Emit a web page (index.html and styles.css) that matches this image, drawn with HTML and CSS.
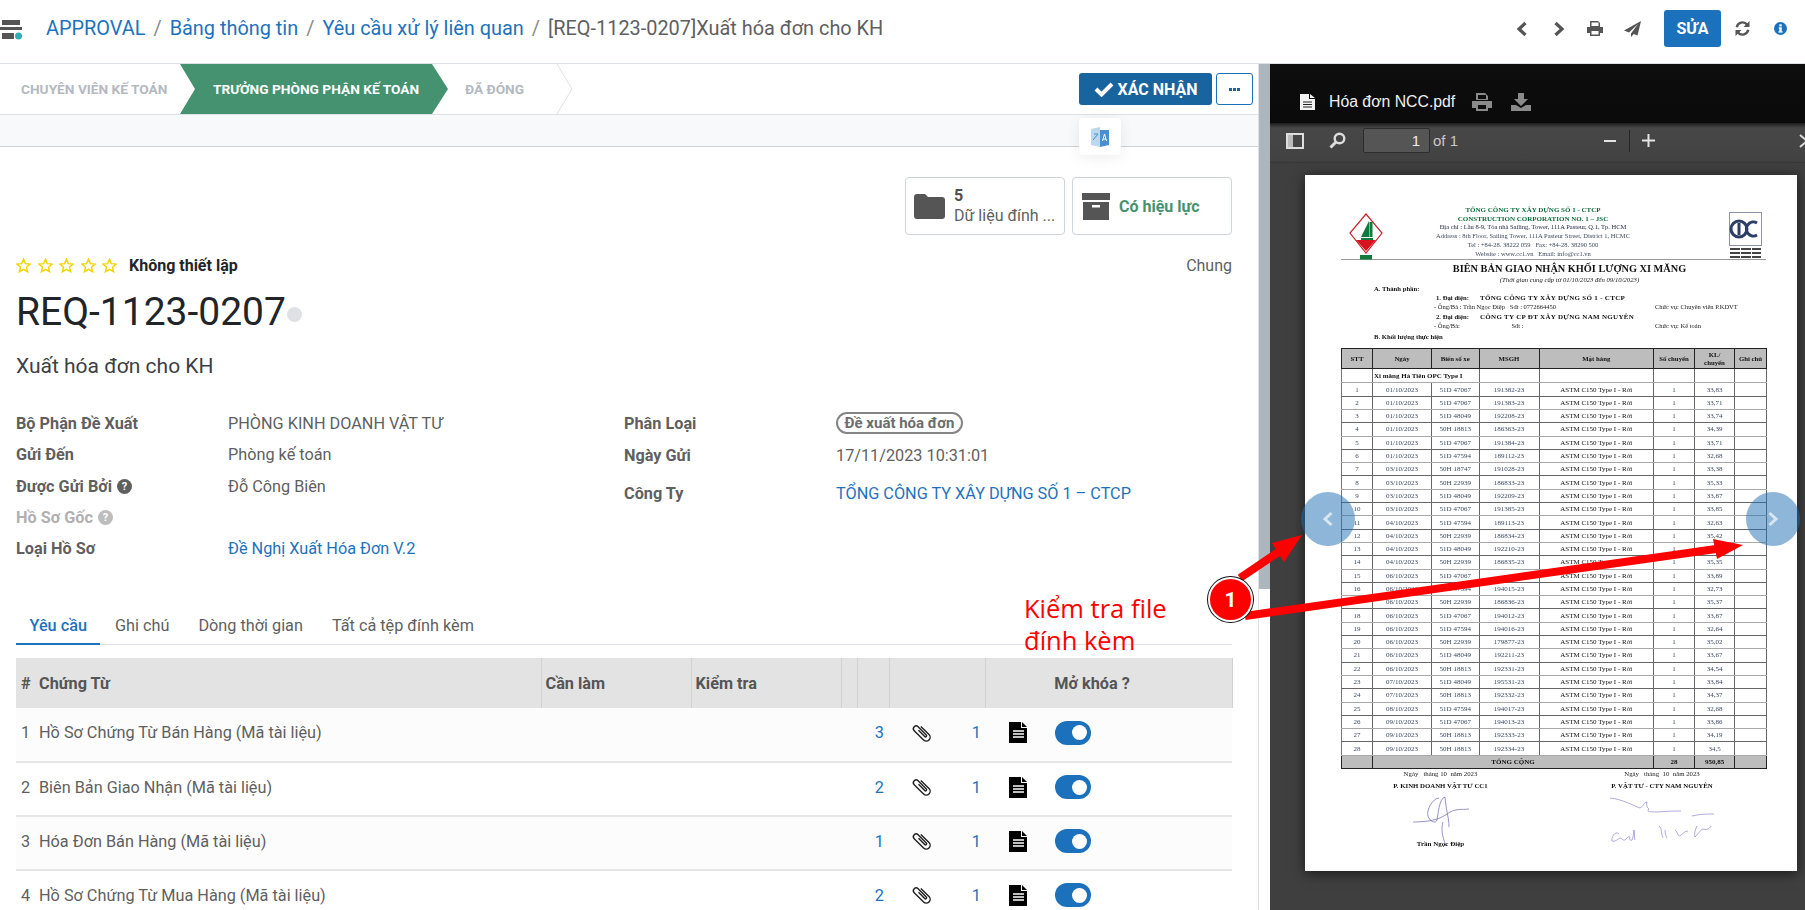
FILE: index.html
```html
<!DOCTYPE html>
<html lang="vi">
<head>
<meta charset="utf-8">
<title>Xuất hóa đơn cho KH</title>
<link rel="stylesheet" href="styles.css">
</head>
<body>
<header class="topbar">
  <svg class="logo" width="24" height="24" viewBox="0 0 24 24"><rect x="2" y="3" width="18" height="5" fill="#555"/><rect x="0" y="10" width="22" height="3" fill="#555"/><rect x="2" y="16" width="12" height="6" fill="#555"/><circle cx="18.500" cy="19" r="3.500" fill="#2fb0b5"/></svg>
  <nav class="crumbs">
    <a>APPROVAL</a><span class="sep">/</span><a>Bảng thông tin</a><span class="sep">/</span><a>Yêu cầu xử lý liên quan</a><span class="sep">/</span><span class="cur">[REQ-1123-0207]Xuất hóa đơn cho KH</span>
  </nav>
  <div class="tools">
    <svg width="12" height="16" viewBox="0 0 12 16" class="t-prev"><path d="M9.500 2 3 8l6.500 6" fill="none" stroke="#555" stroke-width="3.200"/></svg>
    <svg width="12" height="16" viewBox="0 0 12 16" class="t-next"><path d="M2.500 2 9 8l-6.500 6" fill="none" stroke="#555" stroke-width="3.200"/></svg>
    <svg width="16" height="15" viewBox="0 0 16 15" class="t-print"><path d="M3 0h8l2 2v4H3zM0 6h16v6h-3v3H3v-3H0z" fill="#555"/><rect x="4.500" y="1.500" width="7" height="3.500" fill="#fff"/><rect x="4.500" y="10" width="7" height="3.500" fill="#fff"/></svg>
    <svg width="17" height="16" viewBox="0 0 17 16" class="t-send"><path d="M17 0 0 9.500l5 2L14 3 7 12.500V16l2.800-3 3.700 1.500z" fill="#555"/></svg>
    <button class="btn-edit">SỬA</button>
    <svg width="15" height="15" viewBox="0 0 15 15" class="t-sync"><path d="M1.800 6.200A5.800 5.800 0 0 1 12 3.500M13.200 8.800A5.800 5.800 0 0 1 3 11.500" fill="none" stroke="#555" stroke-width="2.400"/><path d="M14.500 0v6h-6zM.5 15V9h6z" fill="#555"/></svg>
    <svg width="13" height="13" viewBox="0 0 13 13" class="t-info"><circle cx="6.500" cy="6.500" r="6.500" fill="#1b71bb"/><rect x="5.300" y="2.300" width="2.400" height="2.200" fill="#fff"/><rect x="4.700" y="5.500" width="3" height="1.200" fill="#fff"/><rect x="5.300" y="5.500" width="2.400" height="4" fill="#fff"/><rect x="4.500" y="9.200" width="4" height="1.400" fill="#fff"/></svg>
  </div>
</header>

<main class="split">
  <section class="form-pane">
    <div class="statusbar">
      <div class="stages">
        <span class="stage">CHUYÊN VIÊN KẾ TOÁN</span>
        <span class="stage active">TRƯỞNG PHÒNG PHẬN KẾ TOÁN</span>
        <span class="stage last">ĐÃ ĐÓNG
          <svg class="chev" width="16" height="50" viewBox="0 0 16 50"><path d="M0 0l15 25L0 50" fill="none" stroke="#dee2e6"/></svg>
        </span>
      </div>
      <div class="actions">
        <button class="btn-confirm"><svg width="20" height="16" viewBox="0 0 20 16"><path d="M2 8l5.500 5.500L18 3" fill="none" stroke="#fff" stroke-width="4"/></svg>XÁC NHẬN</button>
        <button class="btn-more"><i></i><i></i><i></i></button>
      </div>
    </div>
    <div class="strip"></div>
    <div class="translate-pop"><svg width="18" height="20" viewBox="0 0 18 20"><path d="M0 2l9-2v20L0 18z" fill="#bcd8f0"/><path d="M9 3l9 0v15l-9 2z" fill="#4a90d0"/><path d="M2 13l5-6M3 7h4" stroke="#4a90d0" fill="none"/><path d="M11.500 14l2-7 2 7M12.300 12h2.500" stroke="#fff" fill="none"/></svg></div>

    <div class="sheet">
      <div class="stat-row">
        <div class="stat">
          <svg width="31" height="25" viewBox="0 0 31 25"><path d="M3 0h8l3 3h14a3 3 0 0 1 3 3v16a3 3 0 0 1-3 3H3a3 3 0 0 1-3-3V3a3 3 0 0 1 3-3z" fill="#555"/></svg>
          <div class="stat-txt"><b>5</b><span>Dữ liệu đính ...</span></div>
        </div>
        <div class="stat">
          <svg width="28" height="27" viewBox="0 0 28 27"><rect width="28" height="7" fill="#555"/><path d="M1 9h26v18H1z" fill="#555"/><rect x="10" y="12" width="8" height="2.500" fill="#fff"/></svg>
          <b class="stat-green">Có hiệu lực</b>
        </div>
      </div>

      <div class="rating">
        <div class="stars">
          <svg width="15" height="15" viewBox="0 0 24 24"><path d="M12 2l3 7 7.500.7-5.700 5 1.700 7.300L12 18.200 5.500 22l1.700-7.300-5.700-5L9 9z" fill="none" stroke="#f2d500" stroke-width="2.400"/></svg>
          <svg width="15" height="15" viewBox="0 0 24 24"><path d="M12 2l3 7 7.500.7-5.700 5 1.700 7.300L12 18.200 5.500 22l1.700-7.300-5.700-5L9 9z" fill="none" stroke="#f2d500" stroke-width="2.400"/></svg>
          <svg width="15" height="15" viewBox="0 0 24 24"><path d="M12 2l3 7 7.500.7-5.700 5 1.700 7.300L12 18.200 5.500 22l1.700-7.300-5.700-5L9 9z" fill="none" stroke="#f2d500" stroke-width="2.400"/></svg>
          <svg width="15" height="15" viewBox="0 0 24 24"><path d="M12 2l3 7 7.500.7-5.700 5 1.700 7.300L12 18.200 5.500 22l1.700-7.300-5.700-5L9 9z" fill="none" stroke="#f2d500" stroke-width="2.400"/></svg>
          <svg width="15" height="15" viewBox="0 0 24 24"><path d="M12 2l3 7 7.500.7-5.700 5 1.700 7.300L12 18.200 5.500 22l1.700-7.300-5.700-5L9 9z" fill="none" stroke="#f2d500" stroke-width="2.400"/></svg>
        </div>
        <b class="rating-lbl">Không thiết lập</b>
        <span class="rating-right">Chung</span>
      </div>

      <h1 class="title">REQ-1123-0207<i class="dot"></i></h1>
      <div class="subtitle">Xuất hóa đơn cho KH</div>

      <div class="fields">
        <div class="col-left">
          <div class="f"><b>Bộ Phận Đề Xuất</b><span>PHÒNG KINH DOANH VẬT TƯ</span></div>
          <div class="f"><b>Gửi Đến</b><span>Phòng kế toán</span></div>
          <div class="f"><b>Được Gửi Bởi <em class="q">?</em></b><span>Đỗ Công Biên</span></div>
          <div class="f muted"><b>Hồ Sơ Gốc <em class="q">?</em></b></div>
          <div class="f"><b>Loại Hồ Sơ</b><a>Đề Nghị Xuất Hóa Đơn V.2</a></div>
        </div>
        <div class="col-right">
          <div class="f"><b>Phân Loại</b><span class="pill">Đề xuất hóa đơn</span></div>
          <div class="f"><b>Ngày Gửi</b><span>17/11/2023 10:31:01</span></div>
          <div class="f tall"><b>Công Ty</b><a>TỔNG CÔNG TY XÂY DỰNG SỐ 1 – CTCP</a></div>
        </div>
      </div>

      <div class="tabs">
        <span class="tab on">Yêu cầu</span>
        <span class="tab">Ghi chú</span>
        <span class="tab">Dòng thời gian</span>
        <span class="tab">Tất cả tệp đính kèm</span>
      </div>

      <table class="grid">
        <colgroup><col class="c1"><col class="c2"><col class="c3"><col class="c4"><col class="c5"><col class="c6"><col class="c7"><col class="c8"></colgroup>
        <thead><tr><th class="num">#</th><th>Chứng Từ</th><th>Cần làm</th><th>Kiểm tra</th><th></th><th></th><th></th><th class="mid">Mở khóa ?</th></tr></thead>
        <tbody>
          <tr><td class="num">1</td><td>Hồ Sơ Chứng Từ Bán Hàng (Mã tài liệu)</td><td></td><td></td><td></td><td class="cnt">3</td><td><div class="att"><svg width="22" height="22" viewBox="0 0 20 20"><path transform="rotate(-45 10 10)" d="M13.500 5V15.500a3.500 3.500 0 0 1-7 0V3.500a2.500 2.500 0 0 1 5 0V14a1 1 0 0 1-2 0V6" fill="none" stroke="#222" stroke-width="1.300"/></svg><a>1</a></div></td><td><div class="end"><svg width="19" height="21" viewBox="0 0 19 21"><path d="M0 0h12v6h6v15H0z" fill="#000"/><path d="M13 0l5 5h-5z" fill="#000"/><path d="M4 9h11M4 12h11M4 15h11" stroke="#fff" stroke-width="1.300"/></svg><span class="toggle"></span></div></td></tr>
          <tr><td class="num">2</td><td>Biên Bản Giao Nhận (Mã tài liệu)</td><td></td><td></td><td></td><td class="cnt">2</td><td><div class="att"><svg width="22" height="22" viewBox="0 0 20 20"><path transform="rotate(-45 10 10)" d="M13.500 5V15.500a3.500 3.500 0 0 1-7 0V3.500a2.500 2.500 0 0 1 5 0V14a1 1 0 0 1-2 0V6" fill="none" stroke="#222" stroke-width="1.300"/></svg><a>1</a></div></td><td><div class="end"><svg width="19" height="21" viewBox="0 0 19 21"><path d="M0 0h12v6h6v15H0z" fill="#000"/><path d="M13 0l5 5h-5z" fill="#000"/><path d="M4 9h11M4 12h11M4 15h11" stroke="#fff" stroke-width="1.300"/></svg><span class="toggle"></span></div></td></tr>
          <tr><td class="num">3</td><td>Hóa Đơn Bán Hàng (Mã tài liệu)</td><td></td><td></td><td></td><td class="cnt">1</td><td><div class="att"><svg width="22" height="22" viewBox="0 0 20 20"><path transform="rotate(-45 10 10)" d="M13.500 5V15.500a3.500 3.500 0 0 1-7 0V3.500a2.500 2.500 0 0 1 5 0V14a1 1 0 0 1-2 0V6" fill="none" stroke="#222" stroke-width="1.300"/></svg><a>1</a></div></td><td><div class="end"><svg width="19" height="21" viewBox="0 0 19 21"><path d="M0 0h12v6h6v15H0z" fill="#000"/><path d="M13 0l5 5h-5z" fill="#000"/><path d="M4 9h11M4 12h11M4 15h11" stroke="#fff" stroke-width="1.300"/></svg><span class="toggle"></span></div></td></tr>
          <tr><td class="num">4</td><td>Hồ Sơ Chứng Từ Mua Hàng (Mã tài liệu)</td><td></td><td></td><td></td><td class="cnt">2</td><td><div class="att"><svg width="22" height="22" viewBox="0 0 20 20"><path transform="rotate(-45 10 10)" d="M13.500 5V15.500a3.500 3.500 0 0 1-7 0V3.500a2.500 2.500 0 0 1 5 0V14a1 1 0 0 1-2 0V6" fill="none" stroke="#222" stroke-width="1.300"/></svg><a>1</a></div></td><td><div class="end"><svg width="19" height="21" viewBox="0 0 19 21"><path d="M0 0h12v6h6v15H0z" fill="#000"/><path d="M13 0l5 5h-5z" fill="#000"/><path d="M4 9h11M4 12h11M4 15h11" stroke="#fff" stroke-width="1.300"/></svg><span class="toggle"></span></div></td></tr>
        </tbody>
      </table>
    </div>
  </section>

  <div class="scroll"><div class="thumb"></div></div>

  <section class="viewer">
    <div class="v-head">
      <svg width="15" height="16" viewBox="0 0 15 16"><path d="M0 0h9v5h6v11H0z" fill="#f2f2f2"/><path d="M10 0l5 4h-5z" fill="#f2f2f2"/><path d="M3 8h9M3 10.500h9M3 13h9" stroke="#222"/></svg>
      <span class="v-name">Hóa đơn NCC.pdf</span>
      <svg class="v-print" width="20" height="18" viewBox="0 0 20 18"><path d="M4 0h9l3 3v4H4zM0 8h20v7h-4v3H4v-3H0z" fill="#8a8a8a"/><rect x="6" y="2" width="8" height="4" fill="#0d0d0d"/><rect x="6" y="12" width="8" height="4" fill="#0d0d0d"/></svg>
      <svg class="v-dl" width="20" height="18" viewBox="0 0 20 18"><path d="M7 0h6v6h4l-7 7-7-7h4z" fill="#8a8a8a"/><path d="M0 12h5l5 3 5-3h5v6H0z" fill="#8a8a8a"/></svg>
    </div>
    <div class="v-tool">
      <svg class="vt-side" width="18" height="16" viewBox="0 0 18 16"><rect x="1" y="1" width="16" height="14" fill="none" stroke="#ddd" stroke-width="2"/><rect x="2" y="2" width="5" height="12" fill="#bbb"/></svg>
      <svg class="vt-find" width="17" height="17" viewBox="0 0 17 17"><circle cx="10.500" cy="6.500" r="4.800" fill="none" stroke="#ddd" stroke-width="2.400"/><path d="M7 10l-5.500 5.500" stroke="#ddd" stroke-width="3"/></svg>
      <span class="vt-page">1</span>
      <span class="vt-of">of 1</span>
      <span class="vt-minus"></span>
      <span class="vt-div"></span>
      <svg class="vt-plus" width="13" height="13" viewBox="0 0 13 13"><path d="M0 6.500h13M6.500 0v13" stroke="#e4e4e4" stroke-width="2"/></svg>
      <svg class="vt-more" width="10" height="14" viewBox="0 0 10 14"><path d="M1 1l7 6-7 6" fill="none" stroke="#ddd" stroke-width="2"/></svg>
    </div>
    <div class="v-body">
      <article class="page">
        <div class="letterhead">
          <svg class="cc1" width="34" height="48" viewBox="0 0 34 48"><path d="M17 1 33 20 17 40 1 20z" fill="#fff" stroke="#c8232c" stroke-width="1.200"/><path d="M12 24 20 8v16z" fill="#0f7a3c"/><rect x="20.500" y="9" width="3" height="15" fill="#0f7a3c"/><rect x="12" y="25" width="12" height="2" fill="#0f7a3c"/><path d="M7 27h20L17 38z" fill="#d9121f"/><rect x="11" y="42" width="12" height="4.500" fill="#0f7a3c"/></svg>
          <div class="lh-text">
            <div class="lh-green">TỔNG CÔNG TY XÂY DỰNG SỐ 1 - CTCP</div>
            <div class="lh-green">CONSTRUCTION CORPORATION NO. 1 – JSC</div>
            <div class="lh-dark">Địa chỉ : Lầu 8-9, Tòa nhà Sailing, Tower, 111A Pasteur, Q.1, Tp. HCM</div>
            <div>Address : 8th Floor, Sailing Tower, 111A Pasteur Street, District 1, HCMC</div>
            <div>Tel : +84-28. 38222 059 &nbsp; Fax: +84-28. 38290 500</div>
            <div>Website : www.cc1.vn &nbsp; Email: info@cc1.vn</div>
          </div>
          <svg class="cert" width="33" height="48" viewBox="0 0 33 48"><rect x=".5" y=".5" width="32" height="33" fill="#fff" stroke="#8a94a6"/><circle cx="10" cy="17" r="8" fill="none" stroke="#2c3e66" stroke-width="3"/><rect x="8.500" y="11" width="3" height="12" fill="#2c3e66"/><path d="M28 11a7 7 0 1 0 0 12" fill="none" stroke="#2c3e66" stroke-width="3"/><path d="M1 37h31M1 41h31M1 45h31" stroke="#444" stroke-width="2" stroke-dasharray="10 1"/></svg>
        </div>
        <div class="doc-title">BIÊN BẢN GIAO NHẬN KHỐI LƯỢNG XI MĂNG</div>
        <div class="doc-sub">(Thời gian cung cấp từ 01/10/2023 đến 09/10/2023)</div>
        <div class="sec-a">A. Thành phần:</div>
        <div class="party"><b class="p-lbl">1. Đại diện:</b><b class="p-name">TỔNG CÔNG TY XÂY DỰNG SỐ 1 - CTCP</b></div>
        <div class="person"><span class="p-who">- Ông/Bà : Trần Ngọc Điệp &nbsp; Sđt : 0772664450</span><span class="p-role">Chức vụ: Chuyên viên P.KDVT</span></div>
        <div class="party"><b class="p-lbl">2. Đại diện:</b><b class="p-name">CÔNG TY CP ĐT XÂY DỰNG NAM NGUYÊN</b></div>
        <div class="person"><span class="p-who">- Ông/Bà: <span class="p-sdt">Sđt :</span></span><span class="p-role">Chức vụ: Kế toán</span></div>
        <div class="sec-b">B. Khối lượng thực hiện</div>
        <table class="pdf">
          <colgroup><col class="p1"><col class="p2"><col class="p3"><col class="p4"><col class="p5"><col class="p6"><col class="p7"><col class="p8"></colgroup>
          <thead><tr><th>STT</th><th>Ngày</th><th>Biển số xe</th><th>MSGH</th><th>Mặt hàng</th><th>Số chuyến</th><th>KL/<br>chuyến</th><th>Ghi chú</th></tr></thead>
          <tbody>
            <tr class="kind"><td></td><td colspan="2" class="kind-name">Xi măng Hà Tiên OPC Type I</td><td></td><td></td><td></td><td></td><td></td></tr>
            <tr><td>1</td><td>01/10/2023</td><td>51D 47067</td><td>191382-23</td><td class="g">ASTM C150 Type I - Rời</td><td>1</td><td>33,83</td><td></td></tr>
            <tr><td>2</td><td>01/10/2023</td><td>51D 47067</td><td>191383-23</td><td class="g">ASTM C150 Type I - Rời</td><td>1</td><td>33,71</td><td></td></tr>
            <tr><td>3</td><td>01/10/2023</td><td>51D 48049</td><td>192208-23</td><td class="g">ASTM C150 Type I - Rời</td><td>1</td><td>33,74</td><td></td></tr>
            <tr><td>4</td><td>01/10/2023</td><td>50H 18813</td><td>186363-23</td><td class="g">ASTM C150 Type I - Rời</td><td>1</td><td>34,39</td><td></td></tr>
            <tr><td>5</td><td>01/10/2023</td><td>51D 47067</td><td>191384-23</td><td class="g">ASTM C150 Type I - Rời</td><td>1</td><td>33,71</td><td></td></tr>
            <tr><td>6</td><td>01/10/2023</td><td>51D 47594</td><td>189112-23</td><td class="g">ASTM C150 Type I - Rời</td><td>1</td><td>32,68</td><td></td></tr>
            <tr><td>7</td><td>03/10/2023</td><td>50H 18747</td><td>191028-23</td><td class="g">ASTM C150 Type I - Rời</td><td>1</td><td>33,38</td><td></td></tr>
            <tr><td>8</td><td>03/10/2023</td><td>50H 22939</td><td>186833-23</td><td class="g">ASTM C150 Type I - Rời</td><td>1</td><td>35,33</td><td></td></tr>
            <tr><td>9</td><td>03/10/2023</td><td>51D 48049</td><td>192209-23</td><td class="g">ASTM C150 Type I - Rời</td><td>1</td><td>33,87</td><td></td></tr>
            <tr><td>10</td><td>03/10/2023</td><td>51D 47067</td><td>191385-23</td><td class="g">ASTM C150 Type I - Rời</td><td>1</td><td>33,85</td><td></td></tr>
            <tr><td>11</td><td>04/10/2023</td><td>51D 47594</td><td>189113-23</td><td class="g">ASTM C150 Type I - Rời</td><td>1</td><td>32,63</td><td></td></tr>
            <tr><td>12</td><td>04/10/2023</td><td>50H 22939</td><td>186834-23</td><td class="g">ASTM C150 Type I - Rời</td><td>1</td><td>35,42</td><td></td></tr>
            <tr><td>13</td><td>04/10/2023</td><td>51D 48049</td><td>192210-23</td><td class="g">ASTM C150 Type I - Rời</td><td>1</td><td></td><td></td></tr>
            <tr><td>14</td><td>04/10/2023</td><td>50H 22939</td><td>186835-23</td><td class="g">ASTM C150 Type I - Rời</td><td>1</td><td>35,35</td><td></td></tr>
            <tr><td>15</td><td>06/10/2023</td><td>51D 47067</td><td></td><td class="g">ASTM C150 Type I - Rời</td><td>1</td><td>33,89</td><td></td></tr>
            <tr><td>16</td><td>06/10/2023</td><td>51D 47594</td><td>194015-23</td><td class="g">ASTM C150 Type I - Rời</td><td>1</td><td>32,73</td><td></td></tr>
            <tr><td>17</td><td>06/10/2023</td><td>50H 22939</td><td>186836-23</td><td class="g">ASTM C150 Type I - Rời</td><td>1</td><td>35,37</td><td></td></tr>
            <tr><td>18</td><td>06/10/2023</td><td>51D 47067</td><td>194012-23</td><td class="g">ASTM C150 Type I - Rời</td><td>1</td><td>33,87</td><td></td></tr>
            <tr><td>19</td><td>06/10/2023</td><td>51D 47594</td><td>194016-23</td><td class="g">ASTM C150 Type I - Rời</td><td>1</td><td>32,64</td><td></td></tr>
            <tr><td>20</td><td>06/10/2023</td><td>50H 22939</td><td>179877-23</td><td class="g">ASTM C150 Type I - Rời</td><td>1</td><td>35,02</td><td></td></tr>
            <tr><td>21</td><td>06/10/2023</td><td>51D 48049</td><td>192211-23</td><td class="g">ASTM C150 Type I - Rời</td><td>1</td><td>33,67</td><td></td></tr>
            <tr><td>22</td><td>06/10/2023</td><td>50H 18813</td><td>192331-23</td><td class="g">ASTM C150 Type I - Rời</td><td>1</td><td>34,54</td><td></td></tr>
            <tr><td>23</td><td>07/10/2023</td><td>51D 48049</td><td>195531-23</td><td class="g">ASTM C150 Type I - Rời</td><td>1</td><td>33,84</td><td></td></tr>
            <tr><td>24</td><td>07/10/2023</td><td>50H 18813</td><td>192332-23</td><td class="g">ASTM C150 Type I - Rời</td><td>1</td><td>34,37</td><td></td></tr>
            <tr><td>25</td><td>08/10/2023</td><td>51D 47594</td><td>194017-23</td><td class="g">ASTM C150 Type I - Rời</td><td>1</td><td>32,68</td><td></td></tr>
            <tr><td>26</td><td>09/10/2023</td><td>51D 47067</td><td>194013-23</td><td class="g">ASTM C150 Type I - Rời</td><td>1</td><td>33,86</td><td></td></tr>
            <tr><td>27</td><td>09/10/2023</td><td>50H 18813</td><td>192333-23</td><td class="g">ASTM C150 Type I - Rời</td><td>1</td><td>34,19</td><td></td></tr>
            <tr><td>28</td><td>09/10/2023</td><td>50H 18813</td><td>192334-23</td><td class="g">ASTM C150 Type I - Rời</td><td>1</td><td>34,5</td><td></td></tr>
            <tr class="total"><td></td><td colspan="4">TỔNG CỘNG</td><td>28</td><td>950,85</td><td></td></tr>
          </tbody>
        </table>
        <div class="signs">
          <div class="sign">
            <div>Ngày &nbsp; tháng 10 &nbsp;năm 2023</div>
            <b>P. KINH DOANH VẬT TƯ CC1</b>
            <svg width="60" height="52" viewBox="0 0 60 52"><path d="M28 2C22 2 15 14 17 20s8 8 9 4 2-22 8-23c1 14 4 20 4 30M2 26c14 0 26-2 34-8s14-4 22-5M32 26c-2 6-1 14 3 24" fill="none" stroke="#6a64b4" stroke-width=".7"/></svg>
            <b class="sign-name">Trần Ngọc Điệp</b>
          </div>
          <div class="sign">
            <div>Ngày &nbsp; tháng &nbsp;10 &nbsp;năm 2023</div>
            <b>P. VẬT TƯ - CTY NAM NGUYÊN</b>
            <svg width="110" height="46" viewBox="0 0 110 46"><path d="M3 2c12 1 24 8 30 10 4-2 4-6 7-6-1 3 0 6 2 7-3 2 0 3 8 3 12-1 18-1 24-1M85 20c8-2 14-2 22-2M12 38c-4-4-8 4-7 7 3 1 6-2 8-3 2 0 3 3 5 2 2-2 3-4 5-3-1 2 0 4 2 3 2-4 1-8 2-10 1 3 0 8 1 10M52 30c3 2 2 8 4 12M58 34c0 3 1 6 2 8M68 34c3 2 2 6 5 6 3-2 4-5 8-5M90 30c-2 4-3 8-2 11 4-4 6-8 8-8 2 1 6 1 8-3" fill="none" stroke="#7a74c4" stroke-width=".6"/></svg>
          </div>
        </div>
      </article>
    </div>
    <button class="nav prev"><svg width="12" height="16" viewBox="0 0 12 16"><path d="M9.500 2 3 8l6.500 6" fill="none" stroke="#d8e6f2" stroke-width="3"/></svg></button>
    <button class="nav next"><svg width="12" height="16" viewBox="0 0 12 16"><path d="M2.500 2 9 8l-6.500 6" fill="none" stroke="#d8e6f2" stroke-width="3"/></svg></button>
  </section>
</main>

<div class="note">Kiểm tra file<br>đính kèm</div>
<svg class="arrows" width="1805" height="910" viewBox="0 0 1805 910">
  <path d="M1240 578 1280 551" stroke="#f00" stroke-width="8"/>
  <path d="M1302 535 1272 543 1284 562z" fill="#f00"/>
  <path d="M1245 616 1716 549" stroke="#f00" stroke-width="8"/>
  <path d="M1743 545 1713 539 1717 559z" fill="#f00"/>
</svg>
<div class="badge">1</div>
</body>
</html>
```

FILE: styles.css
```css
* { box-sizing: border-box; }
html, body { margin: 0; height: 910px; overflow: hidden; background: #fff; }
body { font-family: Roboto, "Liberation Sans", sans-serif; font-size: 16.250px; color: #5f5f5f; }
a { color: #1d72bd; text-decoration: none; }
button { font-family: inherit; cursor: pointer; }

.topbar { height: 64px; border-bottom: 1px solid #dee2e6; display: flex; align-items: center; position: relative; }
.logo { margin: 0 24px 0 0; flex: none; position: relative; top: -3px; }
.crumbs { font-size: 19.900px; display: flex; align-items: center; position: relative; top: -3px; margin-left: -2px; white-space: nowrap; }
.crumbs .sep { color: #8a8a8a; margin: 0 8px; }
.crumbs .cur { color: #5f5f5f; }
.tools { margin-left: auto; display: flex; align-items: center; padding-right: 18px; position: relative; top: -3px; }
.t-prev { margin-right: 25px; }
.t-next { margin-right: 21.500px; }
.t-print { margin-right: 21px; }
.t-send { margin-right: 23.500px; }
.btn-edit { width: 57px; height: 37px; background: #1b71bb; color: #fff; border: 0; border-radius: 3px; font-size: 16px; font-weight: 700; padding: 0; margin-right: 14px; }
.t-sync { margin-right: 24px; }

.split { display: flex; height: 846px; }
.form-pane { width: 1258px; flex: none; position: relative; }
.scroll { width: 12px; flex: none; background: #fff; border-left: 1px solid #dee2e6; }
.thumb { height: 525px; background: #adb5bd; }

.statusbar { height: 51px; display: flex; justify-content: space-between; align-items: center; border-bottom: 1px solid #dee2e6; }
.stages { display: flex; height: 50px; align-items: center; font-size: 13.700px; font-weight: 700; color: #b4b9c0; white-space: nowrap; }
.stage { padding-left: 21px; width: 180px; }
.stage.active { width: 268px; height: 50px; line-height: 50px; padding-left: 33px; color: #fff; background: #459270; clip-path: polygon(0 0, 252px 0, 268px 50%, 252px 100%, 0 100%, 15px 50%); }
.stage.last { padding-left: 17px; width: 125px; position: relative; height: 50px; line-height: 50px; }
.chev { position: absolute; left: 109px; top: 0; }
.actions { display: flex; gap: 4px; padding-right: 5px; }
.btn-confirm { width: 133px; height: 32px; background: #17649f; color: #fff; border: 0; border-radius: 3px; font-size: 16px; font-weight: 700; display: flex; align-items: center; justify-content: center; gap: 4px; padding: 0; white-space: nowrap; }
.btn-more { width: 37px; height: 32px; background: #fff; border: 1px solid #1b71bb; border-radius: 3px; display: flex; align-items: center; justify-content: center; gap: 1px; padding: 0; }
.btn-more i { width: 3px; height: 3px; background: #1b64a0; }
.strip { height: 32px; background: #f8f9fa; border-bottom: 1px solid #ced4da; }
.translate-pop { position: absolute; left: 1079px; top: 54px; width: 42px; height: 37px; background: #fff; border-radius: 4px; box-shadow: 0 2px 14px rgba(0,0,0,.08); display: flex; align-items: center; justify-content: center; }

.sheet { padding: 30px 26px 0 16px; }
.stat-row { display: flex; justify-content: flex-end; gap: 7px; font-size: 16px; }
.stat { width: 160px; height: 58px; border: 1px solid #ced4da; border-radius: 4px; display: flex; align-items: center; padding-left: 8px; gap: 9px; }
.stat + .stat { padding-left: 9px; gap: 9px; width: 160px; }
.stat-txt { display: flex; flex-direction: column; line-height: 20px; white-space: nowrap; }
.stat-txt b { color: #4f4f4f; }
.stat-green { color: #459270; }

.rating { display: flex; align-items: center; height: 20px; margin-top: 20px; }
.stars { display: flex; gap: 6.500px; }
.rating-lbl { color: #212529; margin-left: 12px; font-size: 16px; }
.rating-right { margin-left: auto; font-size: 16px; }
.title { font-size: 39px; font-weight: 400; color: #212529; margin: 13px 0 0; line-height: 48px; display: flex; align-items: center; }
.dot { width: 15px; height: 15px; border-radius: 50%; background: #dee2e6; margin-top: 4px; margin-left: 1px; }
.subtitle { font-size: 21px; line-height: 24px; color: #3c3f44; margin-top: 18px; }

.fields { display: flex; margin-top: 30px; height: 158px; }
.col-left { width: 608px; }
.col-right { margin-top: -1px; }
.f { display: flex; height: 31.300px; align-items: center; white-space: nowrap; }
.f b { color: #5f5f5f; display: flex; align-items: center; gap: 5px; }
.col-left .f b { width: 212px; flex: none; }
.col-right .f b { width: 212px; flex: none; }
.col-right .f { height: 32px; }
.col-right .f.tall { height: 44px; }
.muted b { color: #b0b0b0; }
.q { width: 15px; height: 15px; border-radius: 50%; background: currentColor; display: inline-flex; align-items: center; justify-content: center; font-style: normal; font-size: 11px; line-height: 1; position: relative; }
.f b .q { color: #5f5f5f; }
.muted b .q { color: #bdbdbd; }
.q { -webkit-text-fill-color: #fff; }
.pill { border: 2px solid #858585; border-radius: 11px; height: 22px; line-height: 18px; width: 127px; text-align: center; font-size: 15px; font-weight: 700; color: #6d6d6d; }

.tabs { display: flex; margin-top: 41px; height: 38px; border-bottom: 1px solid #dee2e6; }
.tab { padding: 0 14.500px; line-height: 37px; height: 38px; }
.tab.on { color: #1d72bd; border-bottom: 2px solid #1d72bd; font-weight: 500; padding: 0 13.500px; }

.grid { margin-top: 13px; width: 1216px; table-layout: fixed; border-collapse: collapse; }
.c1 { width: 20px; } .c2 { width: 505px; } .c3 { width: 150px; } .c4 { width: 150px; } .c5 { width: 16px; } .c6 { width: 32px; } .c7 { width: 96px; } .c8 { width: 247px; }
.grid th { height: 50px; background: #e3e3e3; text-align: left; font-weight: 700; color: #555; padding: 0 4px; border-right: 1px solid #d2d2d2; }
.grid th.num { border-right: 0; padding-left: 5px; padding-right: 0; }
.grid th:nth-child(2) { padding-left: 3px; }
.grid th.mid { text-align: center; padding-right: 37px; }
.grid td { height: 54px; padding: 0 4px 4px; border-bottom: 2px solid #e4e6e8; white-space: nowrap; }
.grid tbody tr:nth-child(odd) td { background: #fcfcfc; }
.grid td.num { padding-left: 5px; padding-right: 0; }
.grid td:nth-child(2) { padding-left: 3px; }
.grid td.cnt { text-align: right; color: #1d72bd; padding-right: 5px; }
.att { display: flex; align-items: center; justify-content: space-between; padding: 0 0 0 18px; }
.end { display: flex; align-items: center; padding-left: 20px; gap: 27px; }
.toggle { width: 36px; height: 24px; border-radius: 12px; background: #1b71bb; position: relative; display: block; }
.toggle::after { content: ""; position: absolute; width: 15px; height: 15px; border-radius: 50%; background: #fff; right: 4px; top: 4.500px; }

.viewer { width: 535px; flex: none; position: relative; background: #3f3f3f; overflow: hidden; }
.v-head { height: 59px; background: linear-gradient(#0e0e0e, #0a0a0a); display: flex; align-items: center; padding: 17px 0 0 30px; }
.v-name { color: #f0f0f0; font-family: "Liberation Sans", sans-serif; font-size: 15.800px; margin-left: 14px; white-space: nowrap; }
.v-print { margin-left: 17px; }
.v-dl { margin-left: 19px; }
.v-tool { height: 40px; background: linear-gradient(#1c1c1c 0, #474747 5px, #424242 38px, #343434 40px); display: flex; align-items: center; padding-bottom: 5px; font-family: "Liberation Sans", sans-serif; position: relative; white-space: nowrap; }
.vt-side { margin-left: 16px; flex: none; }
.vt-find { margin-left: 25px; flex: none; }
.vt-page { margin-left: 17px; width: 67px; height: 25px; border: 1px solid #2c2c2c; border-radius: 2px; background: #555; color: #eee; text-align: right; padding-right: 9px; line-height: 23px; font-size: 15px; flex: none; }
.vt-of { margin-left: 3px; color: #c8c8c8; font-size: 15px; width: 26px; flex: none; }
.vt-minus { margin-left: 145px; width: 12px; height: 2px; background: #e4e4e4; flex: none; }
.vt-div { margin-left: 13px; width: 1px; height: 22px; background: #262626; flex: none; }
.vt-plus { margin-left: 12px; flex: none; }
.vt-more { margin-left: 144px; flex: none; }
.v-body { padding: 12px 0 0 35px; background: #3f3f3f; height: 747px; }

.page { width: 492px; height: 696px; background: #fff; box-shadow: 0 2px 12px rgba(0,0,0,.6); padding: 31px 31px 0 36px; font-family: "Liberation Serif", serif; font-size: 6.500px; color: #3d4a5c; line-height: 8.700px; filter: blur(.3px); white-space: nowrap; }
.letterhead { display: flex; height: 54px; border-bottom: 1.500px solid #9a9a9a; position: relative; align-items: flex-start; width: 425px; }
.cc1 { margin-left: 8px; flex: none; margin-top: 7px; }
.lh-text { flex: none; width: 272px; text-align: center; margin-left: 14px; }
.lh-green { color: #0c6a3a; font-weight: 700; font-size: 7px; }
.lh-dark { color: #1c2440; }
.cert { margin-left: 60px; margin-top: 6px; flex: none; }
.doc-title { text-align: center; font-size: 10.300px; font-weight: 700; color: #111; line-height: 13px; margin-top: 2px; width: 425px; padding-left: 32px; }
.doc-sub { text-align: center; font-style: italic; font-size: 6.700px; color: #222; line-height: 9px; width: 425px; padding-left: 32px; }
.sec-a, .sec-b { margin-left: 33px; font-weight: 700; color: #111; font-size: 6.700px; }
.sec-a { margin-top: 1px; }
.party { display: flex; margin-left: 95px; color: #111; font-size: 6.700px; height: 9.500px; }
.p-lbl { width: 44px; }
.p-name { letter-spacing: .3px; font-size: 7px; }
.person { display: flex; margin-left: 93px; font-size: 6.500px; color: #222; height: 9.500px; }
.p-who { width: 221px; }
.p-sdt { margin-left: 50px; }
.sec-b { margin-top: 1px; }
.pdf { margin-top: 7px; width: 425px; table-layout: fixed; border-collapse: collapse; border: 1.500px solid #333; font-size: 7px; line-height: 8px; }
.p1 { width: 31px; } .p2 { width: 59px; } .p3 { width: 47.500px; } .p4 { width: 60px; } .p5 { width: 114.500px; } .p6 { width: 41px; } .p7 { width: 40px; } .p8 { width: 32px; }
.pdf th { height: 20px; background: #bdbdbd; color: #111; border: 1px solid #222; font-size: 6.800px; padding: 0; }
.pdf td { height: 13.300px; padding: 0; border: 1px solid #666; border-left-color: #777; text-align: center; color: #3a4a63; }
.pdf tbody tr:nth-child(odd) td { border-bottom-color: #a8a8a8; }
.pdf td.g { color: #111; font-weight: 400; }
.kind td { height: 14px; }
.pdf td.kind-name { text-align: left; color: #111; font-weight: 700; padding-left: 1px; }
.pdf .total td { background: #bdbdbd; color: #111; font-weight: 700; height: 13px; border-color: #222; }
.signs { display: grid; grid-template-columns: 199px 244px; margin-top: -1px; color: #222; font-size: 6.800px; text-align: center; }
.sign { display: flex; flex-direction: column; align-items: center; line-height: 12.500px; }
.sign b { color: #111; }
.sign svg { margin-top: 3px; }
.sign-name { margin-top: -10px; font-size: 7px; }

.nav { position: absolute; width: 54px; height: 54px; border-radius: 50%; border: 0; top: 428px; background: rgba(30,110,178,.5); display: flex; align-items: center; justify-content: center; padding: 0; }
.nav.prev { left: 31px; }
.nav.next { left: 476px; }

.note { position: absolute; left: 1024px; top: 592px; color: #f00; font-family: "Open Sans", sans-serif; font-size: 25.500px; line-height: 32px; white-space: nowrap; }
.arrows { position: absolute; left: 0; top: 0; pointer-events: none; }
.badge { position: absolute; left: 1208px; top: 577px; width: 45px; height: 45px; border-radius: 50%; background: #f00; color: #fff; font-weight: 700; font-size: 21px; display: flex; align-items: center; justify-content: center; border: 2px solid #fff; box-shadow: 0 0 0 1px #111; }
```
